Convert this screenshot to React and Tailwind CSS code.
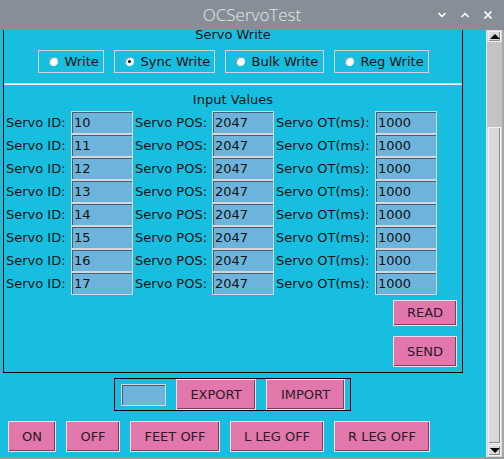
import { ChevronDown, ChevronUp, X } from 'lucide-react';

const ROWS = [10, 11, 12, 13, 14, 15, 16, 17];
const MODES = [
  { label: 'Write', w: 'w-[66px]' },
  { label: 'Sync Write', w: 'w-[101px]', checked: true },
  { label: 'Bulk Write', w: 'w-[99px]' },
  { label: 'Reg Write', w: 'w-[95px]' },
];
const BOTTOM = [
  { label: 'ON', w: 'w-[48px]' },
  { label: 'OFF', w: 'w-[54px]' },
  { label: 'FEET OFF', w: 'w-[90px]' },
  { label: 'L LEG OFF', w: 'w-[94px]' },
  { label: 'R LEG OFF', w: 'w-[96px]' },
];

const font = "font-['DejaVu_Sans',sans-serif]";

function Entry({ value, w = 'w-[62px]', h = 'h-[23px]' }) {
  return (
    <div
      className={`${w} ${h} shrink-0 bg-[#6db4dc] border border-[#d6d6d6] shadow-[inset_1px_1px_0_#43607a] flex items-center pl-[2px] text-[13px] text-[#111]`}
    >
      {value}
    </div>
  );
}

function TkButton({ children, w, h = 'h-[31px]' }) {
  return (
    <button
      className={`${w} ${h} shrink-0 bg-[#e277ab] border border-[#f4dce8] shadow-[inset_-1px_-1px_0_#7e3d5d] flex items-center justify-center text-[13px] text-[#2a1a26]`}
    >
      {children}
    </button>
  );
}

export default function App() {
  return (
    <div className={`w-[504px] h-[459px] flex flex-col overflow-hidden ${font}`}>
      {/* Title bar */}
      <header className="h-[30px] shrink-0 bg-[#878e98] flex items-center relative">
        <span className="flex-1 text-center text-[17px] text-[#e6e9ec] font-['Open_Sans',sans-serif] font-light">
          OCServoTest
        </span>
        <div className="absolute right-[10px] top-[9px] flex items-center gap-[11px] text-white">
          <ChevronDown className="w-[12px] h-[12px]" strokeWidth={3.5} />
          <ChevronUp className="w-[12px] h-[12px]" strokeWidth={3.5} />
          <X className="w-[12px] h-[12px]" strokeWidth={3.5} />
        </div>
      </header>

      <div className="flex h-[427px] shrink-0">
        {/* Scrolled content */}
        <div className="w-[486px] bg-[#18bee0] overflow-hidden flex flex-col">
          {/* Main frame (top scrolled out of view) */}
          <div className="ml-[3px] w-[460px] border-x border-b border-black flex flex-col shrink-0">
            <p className="-mt-[4px] h-[17px] leading-[17px] text-center text-[13px] text-[#111]">Servo Write</p>

            <div className="mt-[7px] flex justify-center gap-[10px]">
              {MODES.map(m => (
                <div
                  key={m.label}
                  className={`${m.w} h-[23px] border border-[#d2d2d2] flex items-center pl-[10px] gap-[7px] text-[13px] text-[#111]`}
                >
                  <span className="w-[9px] h-[9px] rounded-full bg-white shadow-[inset_1px_1px_0_#6a9aac] flex items-center justify-center">
                    {m.checked && <span className="w-[3px] h-[3px] rounded-full bg-black" />}
                  </span>
                  {m.label}
                </div>
              ))}
            </div>

            <div className="mt-[10px] h-[2px] bg-[#d0d0d0] border-b border-[#eeeeee]" />

            <p className="mt-[6px] h-[17px] leading-[17px] text-center text-[13px] text-[#111]">Input Values</p>

            <div className="mt-[3px] flex flex-col">
              {ROWS.map(id => (
                <div key={id} className="h-[23px] flex items-center text-[13px] text-[#111]">
                  <span className="w-[67px] pl-[2px]">Servo ID:</span>
                  <Entry value={id} />
                  <span className="w-[79px] pl-[2px]">Servo POS:</span>
                  <Entry value="2047" />
                  <span className="w-[101px] pl-[2px]">Servo OT(ms):</span>
                  <Entry value="1000" />
                </div>
              ))}
            </div>

            <div className="mt-[5px] self-end mr-[5px] flex flex-col gap-[10px] mb-[5px]">
              <TkButton w="w-[64px]" h="h-[26px]">READ</TkButton>
              <TkButton w="w-[64px]">SEND</TkButton>
            </div>
          </div>

          {/* Export / import */}
          <div className="mt-[5px] ml-[114px] w-[237px] h-[33px] border border-black flex items-center pl-[6px] gap-[10px] shrink-0">
            <Entry value="" w="w-[45px]" h="h-[22px]" />
            <TkButton w="w-[80px]">EXPORT</TkButton>
            <TkButton w="w-[79px]">IMPORT</TkButton>
          </div>

          {/* Bottom buttons */}
          <div className="mt-[10px] ml-[8px] flex gap-[10px] shrink-0">
            {BOTTOM.map(b => (
              <TkButton key={b.label} w={b.w}>{b.label}</TkButton>
            ))}
          </div>
        </div>

        {/* Scrollbar */}
        <div className="w-[18px] bg-[#d9d9d9] border-l border-[#e6e6e6] border-r-2 border-r-[#a8a8a8] flex flex-col pt-[1px] pb-[1px]">
          <div className="h-[11px] mx-[1px] bg-[#d9d9d9] border border-[#f2f2f2] shadow-[inset_-1px_-1px_0_#8c8c8c] flex items-center justify-center">
            <span className="w-0 h-0 border-x-[5px] border-x-transparent border-b-[5px] border-b-black" />
          </div>
          <div className="h-[85px] bg-[#c3c3c3]" />
          <div className="flex-1 mx-[1px] bg-[#d9d9d9] border border-[#f2f2f2] shadow-[inset_-1px_-1px_0_#8c8c8c]" />
          <div className="h-[11px] mx-[1px] mt-[1px] bg-[#d9d9d9] border border-[#f2f2f2] shadow-[inset_-1px_-1px_0_#8c8c8c] flex items-center justify-center">
            <span className="w-0 h-0 border-x-[5px] border-x-transparent border-t-[5px] border-t-black" />
          </div>
        </div>
      </div>

      <div className="h-[2px] bg-[#9a9a9a] shrink-0" />
    </div>
  );
}
